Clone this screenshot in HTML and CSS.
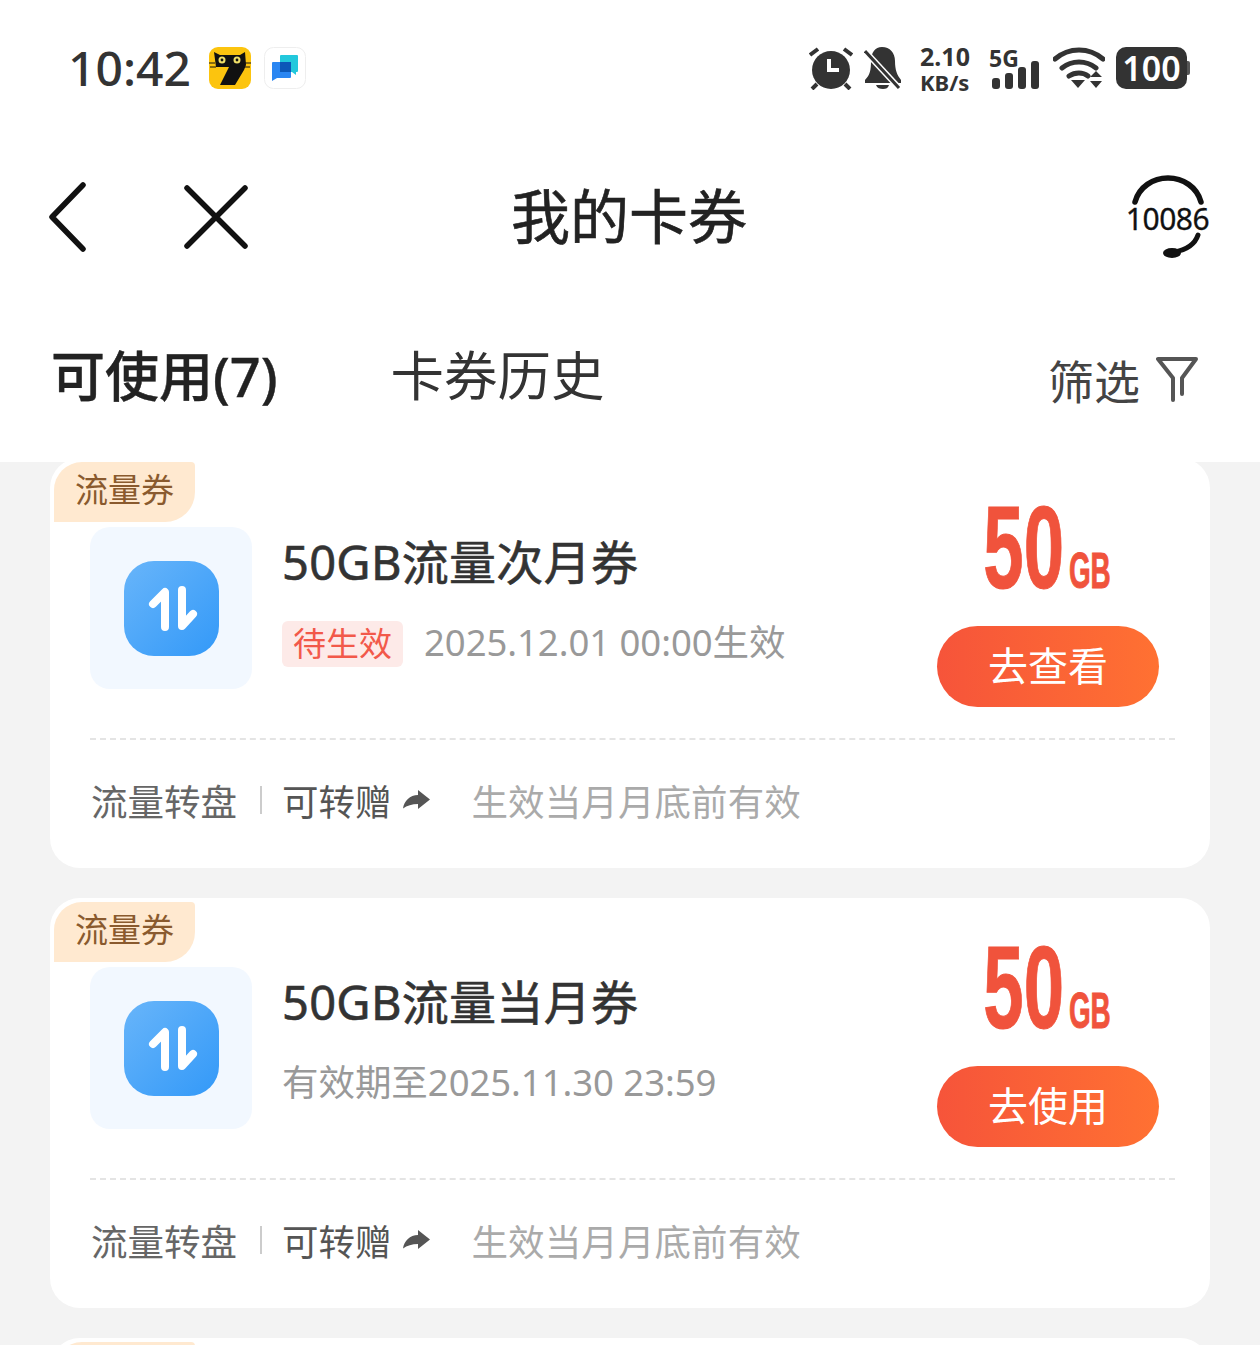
FILE: index.html
```html
<!DOCTYPE html>
<html lang="zh-CN">
<head>
    <meta charset="UTF-8">
    <meta name="viewport" content="width=device-width, initial-scale=1.0">
    <title>我的卡券</title>
    <link rel="stylesheet" href="styles.css">
</head>
<body>
    <div class="page">
        <header class="top">
            <div class="status-bar">
                <div class="status-left">
                    <span class="clock">10:42</span>
                    <svg class="app-icon" viewBox="0 0 42 42">
                        <rect width="42" height="42" rx="9" fill="#fcc40e"/>
                        <path d="M5 5l6 3h20l5-3 1 13-2 5-9 15H11l9-18H7z" fill="#111"/>
                        <circle cx="13" cy="13" r="3.5" fill="#f0e068"/>
                        <circle cx="28" cy="13" r="3.5" fill="#f0e068"/>
                        <circle cx="13" cy="13" r="1.4" fill="#111"/>
                        <circle cx="28" cy="13" r="1.4" fill="#111"/>
                        <path d="M0 16h6M36 16h6M1 20h6M35 20h6" stroke="#111" stroke-width="1"/>
                    </svg>
                    <svg class="app-icon" viewBox="0 0 42 42">
                        <rect x=".5" y=".5" width="41" height="41" rx="9" fill="#fff" stroke="#eee"/>
                        <path d="M16 9a1 1 0 0 1 1-1h16a1 1 0 0 1 1 1v15a1 1 0 0 1-1 1h-1v3l-4-3H16z" fill="#22c8dc"/>
                        <path d="M8 16a1 1 0 0 1 1-1h17a1 1 0 0 1 1 1v14a1 1 0 0 1-1 1H13l-5 3z" fill="#2a86f2"/>
                        <rect x="16" y="15" width="11" height="10" fill="#0c58b8"/>
                    </svg>
                </div>
                <div class="status-right">
                    <svg class="alarm" viewBox="0 0 44 44">
                        <circle cx="22" cy="24" r="19" fill="#333"/>
                        <path d="M20 13v11h10" fill="none" stroke="#fff" stroke-width="4"/>
                        <path d="M1 9l8-6M43 9l-8-6M3 43l5-5M41 43l-5-5" stroke="#333" stroke-width="4"/>
                    </svg>
                    <svg class="bell" viewBox="0 0 38 44">
                        <path d="M18 1c8 0 13 6 13 14 0 9 2 14 6 19v3H1v-3c5-5 6-10 6-19C7 7 11 1 18 1zM12 39h13c-1 3-3 4-6 4s-6-1-7-4z" fill="#333"/>
                        <path d="M0 4l36 39" stroke="#fff" stroke-width="6"/>
                        <path d="M1 5l34 37" stroke="#333" stroke-width="3"/>
                    </svg>
                    <div class="speed">
                        <span class="speed-num">2.10</span>
                        <span class="speed-unit">KB/s</span>
                    </div>
                    <div class="signal">
                        <span class="signal-label">5G</span>
                        <div class="signal-bars">
                            <i class="bar-1"></i><i class="bar-2"></i><i class="bar-3"></i><i class="bar-4"></i>
                        </div>
                    </div>
                    <svg class="wifi" viewBox="0 0 52 44">
                        <path d="M2 13C16 1 36 1 50 13M9 22c10-8 24-8 34 0M16 30c6-4 14-4 19 0" fill="none" stroke="#333" stroke-width="5" stroke-linecap="round"/>
                        <path d="M18 34h14l-7 8zM37 31h12l-6-6zM37 35h12l-6 7z" fill="#333"/>
                    </svg>
                    <div class="battery"><span>100</span></div>
                </div>
            </div>
            <nav class="nav-bar">
                <div class="nav-left">
                    <svg class="nav-back" viewBox="0 0 38 70">
                        <path d="M35 3L4 35l31 32" fill="none" stroke="#111" stroke-width="5.5" stroke-linecap="round" stroke-linejoin="round"/>
                    </svg>
                    <svg class="nav-close" viewBox="0 0 64 64">
                        <path d="M3 3l58 58M61 3L3 61" fill="none" stroke="#111" stroke-width="5.5" stroke-linecap="round"/>
                    </svg>
                </div>
                <h1 class="nav-title">我的卡券</h1>
                <div class="service">
                    <svg class="service-arcs" viewBox="0 0 84 84">
                        <path d="M8 27C12 12 26 3 41 3s29 9 33 24" fill="none" stroke="#111" stroke-width="5.5" stroke-linecap="round"/>
                        <path d="M71 60c-3 9-12 15-24 17" fill="none" stroke="#111" stroke-width="5" stroke-linecap="round"/>
                        <ellipse cx="45" cy="78" rx="9" ry="5" fill="#111"/>
                    </svg>
                    <span class="service-num">10086</span>
                </div>
            </nav>
            <div class="tabs">
                <span class="tab tab-active">可使用(7)</span>
                <span class="tab">卡券历史</span>
                <div class="filter">
                    <span>筛选</span>
                    <svg class="filter-icon" viewBox="0 0 42 46">
                        <path d="M2 3h38L26 22v16M17 44V22L2 3" fill="none" stroke="#555" stroke-width="4" stroke-linejoin="round" stroke-linecap="round"/>
                    </svg>
                </div>
            </div>
        </header>

        <main class="list">
            <section class="card">
                <span class="card-tag">流量券</span>
                <div class="card-main">
                    <div class="tile">
                        <div class="tile-icon">
                            <svg viewBox="0 0 95 95"><path d="M29 43L41 31V66M58 29V65L69 53" fill="none" stroke="#fff" stroke-width="8" stroke-linecap="round" stroke-linejoin="round"/></svg>
                        </div>
                    </div>
                    <div class="card-info">
                        <div class="card-title">50GB流量次月券</div>
                        <div class="card-sub">
                            <span class="badge">待生效</span>
                            <span class="card-date">2025.12.01 00:00生效</span>
                        </div>
                    </div>
                    <div class="card-side">
                        <div class="amount">50<small>GB</small></div>
                        <button class="action" type="button">去查看</button>
                    </div>
                </div>
                <div class="card-foot">
                    <span class="foot-type">流量转盘</span>
                    <i class="foot-sep"></i>
                    <span class="foot-gift">可转赠</span>
                    <svg class="foot-arrow" viewBox="0 0 28 20"><path d="M15 0L27 9.5 15 19V14C9 14 4 15.5 0 18.5 1 11 7 5 15 5z" fill="#555"/></svg>
                    <span class="foot-note">生效当月月底前有效</span>
                </div>
            </section>

            <section class="card">
                <span class="card-tag">流量券</span>
                <div class="card-main">
                    <div class="tile">
                        <div class="tile-icon">
                            <svg viewBox="0 0 95 95"><path d="M29 43L41 31V66M58 29V65L69 53" fill="none" stroke="#fff" stroke-width="8" stroke-linecap="round" stroke-linejoin="round"/></svg>
                        </div>
                    </div>
                    <div class="card-info">
                        <div class="card-title">50GB流量当月券</div>
                        <div class="card-sub">
                            <span class="card-date">有效期至2025.11.30 23:59</span>
                        </div>
                    </div>
                    <div class="card-side">
                        <div class="amount">50<small>GB</small></div>
                        <button class="action" type="button">去使用</button>
                    </div>
                </div>
                <div class="card-foot">
                    <span class="foot-type">流量转盘</span>
                    <i class="foot-sep"></i>
                    <span class="foot-gift">可转赠</span>
                    <svg class="foot-arrow" viewBox="0 0 28 20"><path d="M15 0L27 9.5 15 19V14C9 14 4 15.5 0 18.5 1 11 7 5 15 5z" fill="#555"/></svg>
                    <span class="foot-note">生效当月月底前有效</span>
                </div>
            </section>

            <section class="card">
                <span class="card-tag"></span>
            </section>
        </main>
    </div>
</body>
</html>
```

FILE: styles.css
```css
* {
    box-sizing: border-box;
}
body {
    margin: 0;
    font-family: "Noto Sans", "Noto Sans CJK SC", sans-serif;
    color: #333;
    background: #f3f3f3;
}
.page {
    width: 1260px;
    height: 1345px;
    overflow: hidden;
    display: flex;
    flex-direction: column;
}
.top {
    height: 462px;
    flex: none;
    background: #fff;
}

/* status bar */
.status-bar {
    height: 136px;
    padding: 0 73px 0 68px;
    display: flex;
    justify-content: space-between;
    align-items: center;
}
.status-left {
    display: flex;
    align-items: center;
    gap: 13px;
}
.clock {
    font-size: 48px;
    font-weight: 500;
    line-height: 1;
    margin-right: 5px;
}
.app-icon {
    width: 42px;
    height: 42px;
}
.status-right {
    display: flex;
    align-items: center;
}
.alarm {
    width: 44px;
    height: 44px;
}
.bell {
    width: 38px;
    height: 44px;
    margin-left: 11px;
}
.speed {
    width: 52px;
    margin-left: 18px;
    display: flex;
    flex-direction: column;
    gap: 2px;
    font-weight: 700;
    line-height: 1;
    white-space: nowrap;
}
.speed-num {
    font-size: 25px;
}
.speed-unit {
    font-size: 22px;
}
.signal {
    width: 50px;
    margin-left: 17px;
    display: flex;
    flex-direction: column;
}
.signal-label {
    font-size: 23px;
    font-weight: 700;
    line-height: 20px;
}
.signal-bars {
    height: 28px;
    margin-left: 3px;
    margin-top: -7px;
    display: flex;
    align-items: flex-end;
    gap: 5px;
}
.signal-bars i {
    width: 8px;
    background: #333;
    border-radius: 3px;
}
.bar-1 { height: 11px; }
.bar-2 { height: 16px; }
.bar-3 { height: 22px; }
.bar-4 { height: 28px; }
.wifi {
    width: 52px;
    height: 44px;
    margin-left: 14px;
}
.battery {
    width: 71px;
    height: 42px;
    margin-left: 11px;
    border-radius: 10px;
    background: #333;
    color: #fff;
    font-size: 34px;
    font-weight: 600;
    display: flex;
    align-items: center;
    justify-content: center;
    position: relative;
}
.battery::after {
    content: "";
    position: absolute;
    right: -3px;
    top: 14px;
    width: 3px;
    height: 14px;
    background: #555;
    border-radius: 0 2px 2px 0;
}

/* nav */
.nav-bar {
    height: 162px;
    padding: 0 50px 0 48px;
    display: grid;
    grid-template-columns: 1fr auto 1fr;
    align-items: center;
}
.nav-left {
    display: flex;
    align-items: center;
    gap: 98px;
}
.nav-back {
    width: 38px;
    height: 70px;
}
.nav-close {
    width: 64px;
    height: 64px;
}
.nav-title {
    margin: -2px 0 0;
    font-size: 59px;
    font-weight: 400;
    -webkit-text-stroke: .6px #222;
    line-height: 1;
    color: #222;
}
.service {
    justify-self: end;
    margin-right: -1px;
    width: 84px;
    height: 84px;
    position: relative;
    display: flex;
    align-items: center;
    justify-content: center;
}
.service-arcs {
    position: absolute;
    inset: 0;
}
.service-num {
    font-size: 30px;
    color: #111;
    -webkit-text-stroke: .3px #111;
    line-height: 1;
    letter-spacing: -.5px;
    margin: 4px 0 0 -3px;
    position: relative;
}

/* tabs */
.tabs {
    height: 156px;
    padding: 0 62px 0 51px;
    display: flex;
    align-items: center;
}
.tab {
    font-size: 53.5px;
    line-height: 1;
    color: #333;
}
.tab-active {
    font-size: 54px;
    font-weight: 500;
    -webkit-text-stroke: .4px #222;
    color: #222;
    margin-right: 113px;
}
.filter {
    margin-left: auto;
    margin-top: 5px;
    display: flex;
    align-items: center;
    gap: 16px;
    font-size: 46px;
    color: #444;
}
.filter-icon {
    width: 42px;
    height: 46px;
}

/* list */
.list {
    flex: 1;
    margin-top: -4px;
    padding: 0 50px;
    display: flex;
    flex-direction: column;
    gap: 30px;
}
.card {
    flex: none;
    height: 410px;
    background: #fff;
    border-radius: 30px;
    padding: 46px 35px 0 40px;
    position: relative;
}
.card-tag {
    position: absolute;
    left: 4px;
    top: 4px;
    width: 141px;
    height: 60px;
    background: #ffe9d0;
    border-radius: 28px 4px 30px 0;
    color: #8a5a2e;
    font-size: 33px;
    line-height: 56px;
    text-align: center;
}
.card-main {
    height: 236px;
    display: flex;
    border-bottom: 2px dashed #e4e4e4;
}
.tile {
    width: 162px;
    height: 162px;
    margin-top: 23px;
    background: #f2f8ff;
    border-radius: 20px;
    display: flex;
    align-items: center;
    justify-content: center;
}
.tile-icon {
    width: 95px;
    height: 95px;
    border-radius: 30px;
    background: linear-gradient(135deg, #68b5fa, #3399f8);
}
.tile-icon svg {
    display: block;
    width: 95px;
    height: 95px;
}
.card-info {
    flex: 1;
    margin-left: 30px;
}
.card-title {
    margin-top: 27px;
    font-size: 47px;
    font-weight: 400;
    -webkit-text-stroke: .6px #333;
    letter-spacing: .3px;
    line-height: 62px;
    color: #333;
    white-space: nowrap;
}
.card-sub {
    margin-top: 26px;
    display: flex;
    align-items: center;
    height: 50px;
}
.badge {
    height: 46px;
    padding: 0 11px;
    border-radius: 6px;
    background: #fdeae8;
    color: #f2594a;
    font-size: 33px;
    line-height: 46px;
    margin-right: 21px;
}
.card-date {
    font-size: 36.5px;
    letter-spacing: -.05px;
    margin-bottom: 8px;
    color: #999;
    white-space: nowrap;
}
.card-side {
    width: 222px;
    margin-right: 16px;
    display: flex;
    flex-direction: column;
    align-items: center;
}
.amount {
    height: 122px;
    padding-top: 2px;
    font-family: "Liberation Sans", sans-serif;
    font-size: 117px;
    font-weight: 700;
    line-height: 84px;
    color: #f0533c;
    -webkit-text-stroke: 1px #f0533c;
    transform: scaleX(.62);
    white-space: nowrap;
}
.amount small {
    display: inline-block;
    font-size: 50px;
    line-height: 1;
    margin-left: 2px;
    transform-origin: left;
    transform: translateX(6px) scaleX(.9);
}
.action {
    width: 222px;
    height: 81px;
    padding: 0 0 5px;
    border: none;
    border-radius: 41px;
    background: linear-gradient(90deg, #f6543a, #ff7132);
    color: #fff;
    font-family: inherit;
    font-size: 40px;
}
.card-foot {
    height: 120px;
    padding-left: 1px;
    display: flex;
    align-items: center;
    font-size: 36.5px;
    color: #666;
}
.foot-sep {
    width: 2px;
    height: 28px;
    margin: 0 20px 0 23px;
    background: #ccc;
}
.foot-gift {
    color: #555;
}
.foot-arrow {
    width: 28px;
    height: 20px;
    margin: 0 41px 0 11px;
}
.foot-note {
    color: #aaa;
    letter-spacing: .1px;
}
```
